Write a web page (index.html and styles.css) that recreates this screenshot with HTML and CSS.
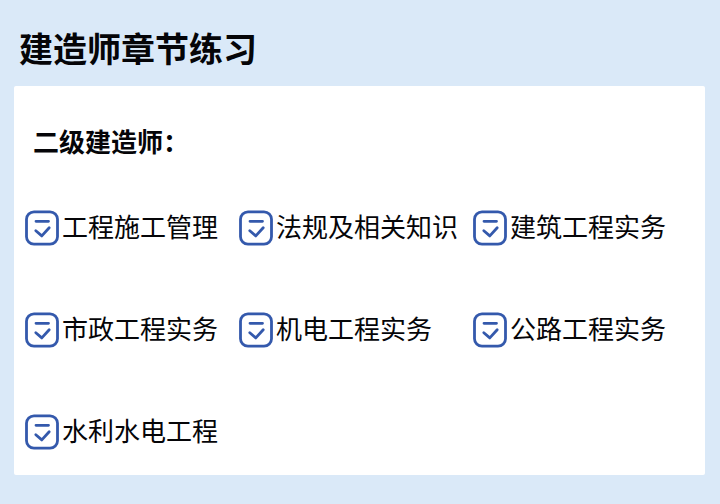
FILE: index.html
```html
<!DOCTYPE html>
<html lang="zh-CN">
<head>
<meta charset="utf-8">
<meta name="viewport" content="width=device-width, initial-scale=1">
<title>建造师章节练习</title>
<link rel="stylesheet" href="styles.css">
</head>
<body>
<svg class="symbols" aria-hidden="true">
  <symbol id="check" viewBox="0 0 34 36">
    <rect x="1.5" y="1.8" width="31" height="32.4" rx="7.5"/>
    <path d="M11 11.3h12.5M10.8 20.7l6 5.2 7.4-8.2"/>
  </symbol>
</svg>
<main class="page">
  <h1 class="title">建造师章节练习</h1>
  <section class="card">
    <h2 class="subtitle">二级建造师：</h2>
    <ul class="subjects">
      <li><a class="subject" href="#"><svg class="icon" aria-hidden="true"><use href="#check"/></svg>工程施工管理</a></li>
      <li><a class="subject" href="#"><svg class="icon" aria-hidden="true"><use href="#check"/></svg>法规及相关知识</a></li>
      <li><a class="subject" href="#"><svg class="icon" aria-hidden="true"><use href="#check"/></svg>建筑工程实务</a></li>
      <li><a class="subject" href="#"><svg class="icon" aria-hidden="true"><use href="#check"/></svg>市政工程实务</a></li>
      <li><a class="subject" href="#"><svg class="icon" aria-hidden="true"><use href="#check"/></svg>机电工程实务</a></li>
      <li><a class="subject" href="#"><svg class="icon" aria-hidden="true"><use href="#check"/></svg>公路工程实务</a></li>
      <li><a class="subject" href="#"><svg class="icon" aria-hidden="true"><use href="#check"/></svg>水利水电工程</a></li>
    </ul>
  </section>
</main>
</body>
</html>
```
FILE: styles.css
```css
* {
  box-sizing: border-box;
}

body {
  margin: 0;
  background: #dae9f8;
  color: #050508;
  font-family: "Noto Sans CJK SC", sans-serif;
}

.symbols {
  position: absolute;
  width: 0;
  height: 0;
}

.page {
  padding: 23px 15px 29px 14px;
}

.title {
  margin: 0 0 13px 5px;
  font-size: 34px;
  line-height: 50px;
  font-weight: 700;
}

.card {
  padding: 37px 0 25px 11px;
  background: #fff;
  border-radius: 2px;
}

.subtitle {
  margin: 0 0 51px 8px;
  font-size: 26px;
  line-height: 36px;
  font-weight: 700;
}

.subjects {
  display: grid;
  grid-template-columns: 214fr 234fr 232fr;
  row-gap: 66px;
  margin: 0;
  padding: 0;
  list-style: none;
}

.subject {
  display: flex;
  align-items: flex-start;
  gap: 3px;
  color: inherit;
  font-size: 26px;
  line-height: 32px;
  text-decoration: none;
  white-space: nowrap;
}

.icon {
  flex: none;
  width: 34px;
  height: 36px;
  fill: none;
  stroke: #3459ac;
  stroke-width: 2.8;
  stroke-linecap: round;
  stroke-linejoin: round;
}
```
